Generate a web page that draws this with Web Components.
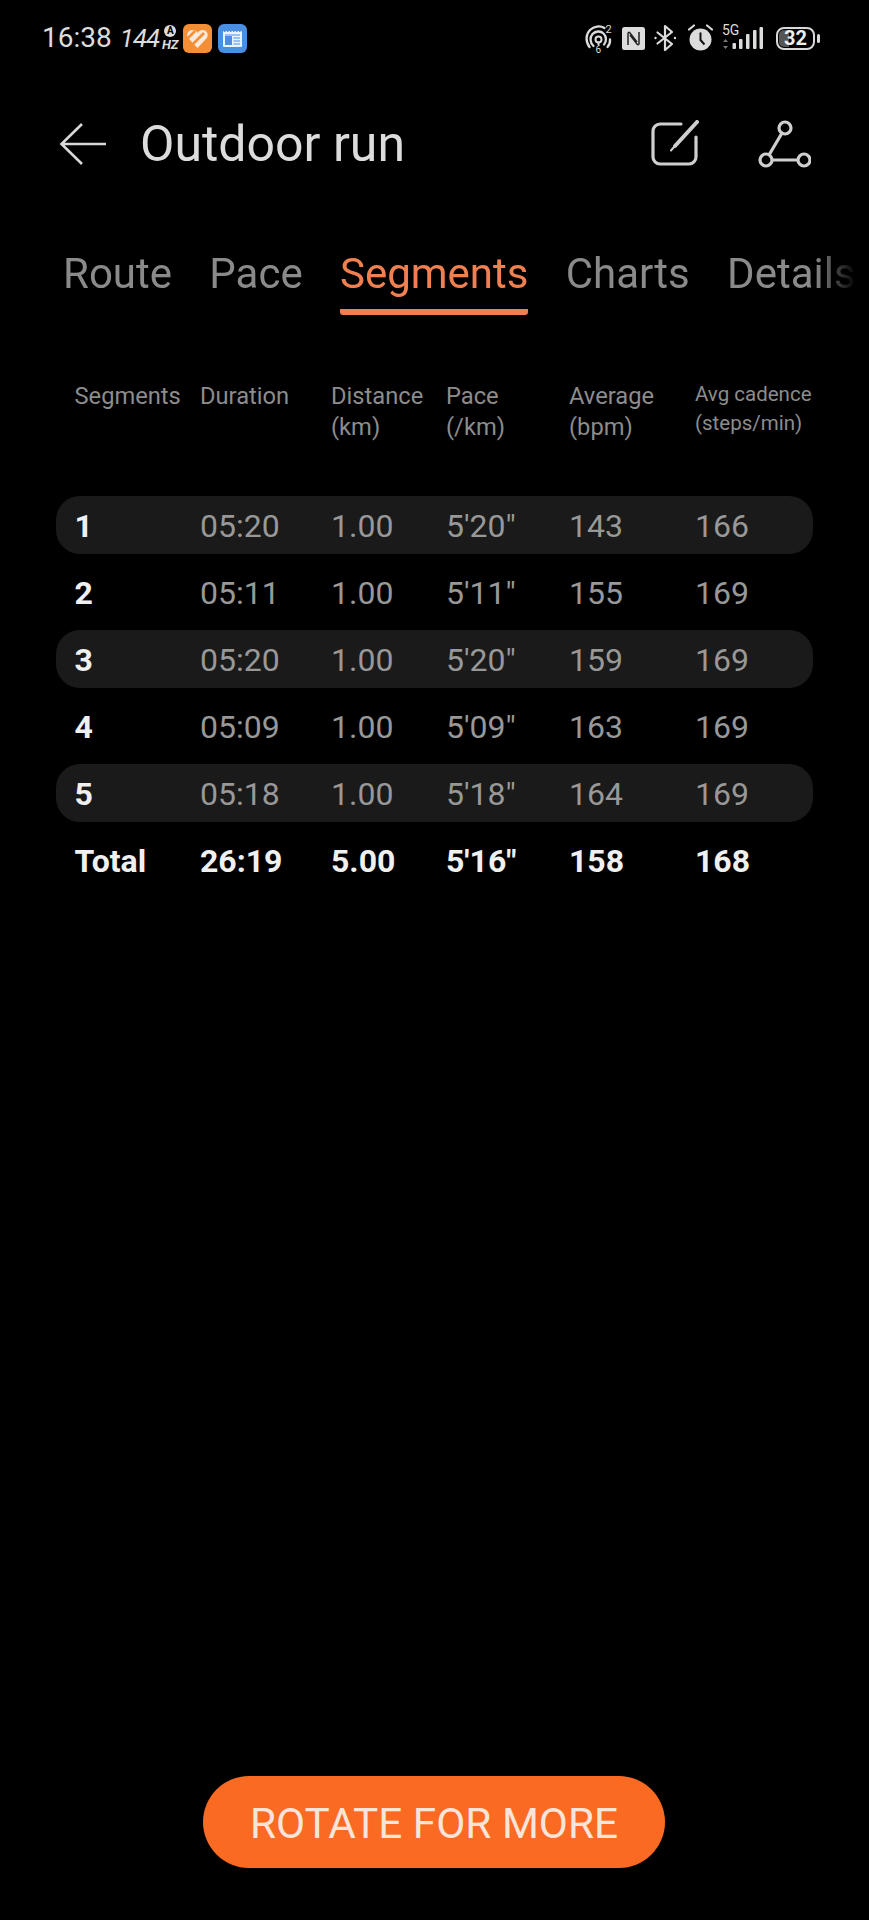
<!DOCTYPE html>
<html>
<head>
<meta charset="utf-8">
<title>Outdoor run</title>
<style>
html,body{ margin:0; background:#000; }
body{
    width:869px;
    height:1920px;
    overflow:hidden;
    display:flex;
    flex-direction:column;
    font-family:Roboto,"Liberation Sans",sans-serif;
    color:#ddd;
}
seg-table{ margin-top:66px; }
rotate-button{ margin-top:auto; margin-bottom:52px; margin-left:203px; align-self:flex-start; }
</style>
</head>
<body>
<status-bar></status-bar>
<run-header title="Outdoor run"></run-header>
<run-tabs active="2"></run-tabs>
<seg-table>
    <seg-row striped cells="1|05:20|1.00|5'20&quot;|143|166"></seg-row>
    <seg-row cells="2|05:11|1.00|5'11&quot;|155|169"></seg-row>
    <seg-row striped cells="3|05:20|1.00|5'20&quot;|159|169"></seg-row>
    <seg-row cells="4|05:09|1.00|5'09&quot;|163|169"></seg-row>
    <seg-row striped cells="5|05:18|1.00|5'18&quot;|164|169"></seg-row>
    <seg-row total cells="Total|26:19|5.00|5'16&quot;|158|168"></seg-row>
</seg-table>
<rotate-button>ROTATE FOR MORE</rotate-button>

<script>
class StatusBar extends HTMLElement {
    constructor() {
        super();
        const shadowRoot = this.attachShadow({ mode: 'open' });
        shadowRoot.innerHTML = `
        <style>
        :host{
            display:flex;
            align-items:center;
            height:28px;
            padding:24px 54px 0 42px;
            color:#dcdcdc;
        }
        .time{ font-size:28px; line-height:28px; }
        .hz{ display:flex; align-items:center; margin-left:8px; }
        .rate{ font-size:26px; font-style:italic; letter-spacing:-1px; line-height:28px; }
        .unit{ display:flex; flex-direction:column; align-items:center; margin-left:3px; width:16px; }
        .auto{
            width:12px; height:12px; border-radius:50%;
            background:#dcdcdc; color:#000;
            font-size:10px; font-weight:700; line-height:12px; text-align:center;
        }
        .hzt{ font-size:13px; font-weight:700; font-style:italic; line-height:13px; margin-top:1px; }
        .apps{ display:flex; gap:6px; margin-left:5px; }
        .apps svg{ display:block; }
        .right{ display:flex; align-items:center; margin-left:auto; }
        .right svg{ display:block; }
        .net{ position:relative; width:43px; height:28px; margin-left:8px; }
        .net span{ position:absolute; left:0; top:-1px; font-size:14px; line-height:14px; }
        .net svg{ position:absolute; left:0; top:0; }
        .batt{
            position:relative;
            box-sizing:border-box;
            width:39px; height:23px;
            margin-left:11px;
            border:2px solid #d8d8d8;
            border-radius:8px;
            font-size:20px; font-weight:700; line-height:19px; text-align:center;
            color:#eee;
            background:linear-gradient(90deg,#555 0,#555 32%,#000 32%);
            background-clip:content-box;
            padding:1px;
        }
        .batt span{ display:block; margin-top:-1px; }
        .batt::after{
            content:''; position:absolute; right:-7px; top:5px;
            width:3px; height:9px; border-radius:2px; background:#d8d8d8;
        }
        </style>
        <span class="time">16:38</span>
        <span class="hz">
            <span class="rate">144</span>
            <span class="unit"><span class="auto">A</span><span class="hzt">HZ</span></span>
        </span>
        <span class="apps">
            <svg width="29" height="29" viewBox="0 0 29 29">
                <rect width="29" height="29" rx="6" fill="#f58f35"/>
                <path d="M14.5 24 5.6 14.6C2.6 11 5 6 9.4 6c2 0 3.7 1 5.1 2.8C15.9 7 17.6 6 19.6 6c4.4 0 6.800 5 3.800 8.600Z" fill="#fbeadb"/>
                <path d="M2 17 12 7M8 22 21 9" stroke="#f58f35" stroke-width="2.600" fill="none"/>
            </svg>
            <svg width="29" height="29" viewBox="0 0 29 29">
                <rect width="29" height="29" rx="6" fill="#4b8fe3"/>
                <rect x="5" y="7" width="19" height="16" rx="1" fill="#eaf2fc"/>
                <path d="M6 7.500h17" stroke="#4b8fe3" stroke-width="1" stroke-dasharray="1.500 1.500"/>
                <rect x="7" y="12" width="7" height="9" fill="#4b8fe3"/>
                <path d="M7 11h15M15.500 14h6.500M15.500 17h6.500M15.500 20h6.500" stroke="#4b8fe3" stroke-width="1.200"/>
            </svg>
        </span>
        <span class="right">
            <svg width="30" height="30" viewBox="0 0 30 30" fill="none" stroke="#dcdcdc" stroke-linecap="round">
                <path d="M5.500 24C1.500 19 1.500 11.500 6 7c4-4 10-4.500 14.500-2" stroke-width="2.300"/>
                <path d="M26 16.500c.3 3-.7 5.500-2.500 7.500" stroke-width="2.300"/>
                <path d="M9.500 23c-3.500-3-4-8.500-1-12 3-3 8-3.500 11-.5 3 2.800 3.200 8 .5 11" stroke-width="2.300"/>
                <circle cx="14.500" cy="16.500" r="3" stroke-width="2"/>
                <path d="M14.500 19.500v2" stroke-width="2"/>
                <text x="21.500" y="9.500" fill="#dcdcdc" stroke="none" font-size="11" font-family="Roboto">2</text>
                <text x="11.500" y="29.500" fill="#dcdcdc" stroke="none" font-size="10" font-family="Roboto">6</text>
            </svg>
            <svg style="margin-left:8px" width="23" height="23" viewBox="0 0 23 23">
                <rect width="23" height="23" rx="2.500" fill="#dcdcdc"/>
                <path d="M6 18V6.500c0-1.300 1-1.500 1.800-.7L15 15M17 5v11.500c0 1.300-1 1.500-1.800.7L8 8" stroke="#222" stroke-width="1.500" fill="none" stroke-linejoin="round"/>
            </svg>
            <svg style="margin-left:9px" width="23" height="28" viewBox="0 0 23 28" fill="none" stroke="#dcdcdc" stroke-width="2.200" stroke-linejoin="round" stroke-linecap="round">
                <path d="M3.500 8.500 18 20l-7 6V2l7 6L3.500 19.500"/>
                <circle cx="1.500" cy="14" r="1.200" fill="#dcdcdc" stroke="none"/>
                <circle cx="21" cy="14" r="1.200" fill="#dcdcdc" stroke="none"/>
            </svg>
            <svg style="margin-left:10px" width="27" height="30" viewBox="0 0 27 30" fill="none">
                <circle cx="13.500" cy="16.500" r="11" fill="#dcdcdc"/>
                <path d="M13.500 9.500v7.500l4 4.500" stroke="#111" stroke-width="2"/>
                <path d="M2 6.500 7 2.500M25 6.500 20 2.500" stroke="#dcdcdc" stroke-width="2.200" stroke-linecap="round"/>
            </svg>
            <span class="net">
                <span>5G</span>
                <svg width="43" height="28" viewBox="0 0 43 28">
                    <path d="M3.500 15 1 18h5ZM3.500 25 1 22h5Z" fill="#777"/>
                    <g fill="#dcdcdc">
                        <rect x="10.500" y="19" width="3.500" height="6" rx="1"/>
                        <rect x="17" y="15" width="3.500" height="10" rx="1"/>
                        <rect x="24" y="10" width="3.500" height="15" rx="1"/>
                        <rect x="31" y="6" width="3.500" height="19" rx="1"/>
                        <rect x="37.500" y="3" width="3.500" height="22" rx="1"/>
                    </g>
                </svg>
            </span>
            <span class="batt"><span>32</span></span>
        </span>
        `
    }
}

class RunHeader extends HTMLElement {
    constructor() {
        super();
        const shadowRoot = this.attachShadow({ mode: 'open' });
        shadowRoot.innerHTML = `
        <style>
        :host{
            display:flex;
            align-items:center;
            height:60px;
            margin-top:62px;
            padding:0 58px 0 59px;
        }
        svg{ display:block; }
        h1{
            margin:0 0 0 33px;
            font-size:50px;
            font-weight:400;
            line-height:60px;
            color:#dcdcdc;
        }
        .tools{ display:flex; align-items:center; gap:58px; margin-left:auto; }
        </style>
        <svg width="48" height="44" viewBox="0 0 48 44" fill="none" stroke="#d8d8d8" stroke-width="2.600">
            <path d="M47 22H3M23 2 2.500 22 23 42"/>
        </svg>
        <h1></h1>
        <span class="tools">
            <svg width="50" height="48" viewBox="0 0 50 48" fill="none" stroke="#cfcfcf" stroke-width="3.200" stroke-linecap="round">
                <path d="M31 4H10a7 7 0 0 0-7 7v26a7 7 0 0 0 7 7h29a7 7 0 0 0 7-7V17"/>
                <path d="M47 2 25 26" stroke-width="4"/>
                <path d="M24 27 21 30.500" stroke-width="2"/>
            </svg>
            <svg width="53" height="48" viewBox="0 0 53 48" fill="none" stroke="#cfcfcf" stroke-width="3.200">
                <circle cx="27" cy="8" r="6"/>
                <circle cx="8" cy="40" r="6"/>
                <circle cx="46" cy="40" r="6"/>
                <path d="M24 13 11 35M14 40h26"/>
            </svg>
        </span>
        `
    }

    connectedCallback() {
        this.shadowRoot.querySelector('h1').textContent = this.getAttribute('title');
        this.removeAttribute('title');
    }
}

class RunTabs extends HTMLElement {
    constructor() {
        super();
        const shadowRoot = this.attachShadow({ mode: 'open' });
        shadowRoot.innerHTML = `
        <style>
        :host{
            display:flex;
            gap:37.300px;
            height:69px;
            margin-top:72px;
            padding-left:63px;
            overflow:hidden;
            -webkit-mask-image:linear-gradient(90deg,#000 0,#000 815px,transparent 856px);
            mask-image:linear-gradient(90deg,#000 0,#000 815px,transparent 856px);
        }
        .tab{
            flex:none;
            box-sizing:border-box;
            height:69px;
            font-size:42px;
            line-height:56px;
            color:#8a8a8a;
        }
        .tab.on{
            color:#f0804f;
            border-bottom:6px solid #f0804f;
            border-radius:0 0 3px 3px;
        }
        </style>
        `
        for (const name of ['Route','Pace','Segments','Charts','Details']) {
            const el = document.createElement('span');
            el.className = 'tab';
            el.textContent = name;
            shadowRoot.appendChild(el);
        }
    }

    connectedCallback() {
        const tabs = this.shadowRoot.querySelectorAll('.tab');
        tabs[Number(this.getAttribute('active'))].classList.add('on');
    }
}

const COLUMNS = 'grid-template-columns:125.500px 131px 115px 123px 126px 1fr;';

class SegTable extends HTMLElement {
    constructor() {
        super();
        const shadowRoot = this.attachShadow({ mode: 'open' });
        shadowRoot.innerHTML = `
        <style>
        :host{
            display:block;
            padding:0 56px;
        }
        .head{
            display:grid;
            ${COLUMNS}
            height:115px;
            padding-left:18.500px;
            font-size:23.700px;
            line-height:31px;
            color:#8c8c8c;
            white-space:nowrap;
        }
        .small{ font-size:20.500px; line-height:29px; margin-top:-1px; }
        .rows{ display:flex; flex-direction:column; gap:9px; }
        </style>
        <div class="head">
            <span>Segments</span>
            <span>Duration</span>
            <span>Distance<br>(km)</span>
            <span>Pace<br>(/km)</span>
            <span>Average<br>(bpm)</span>
            <span class="small">Avg cadence<br>(steps/min)</span>
        </div>
        <div class="rows"><slot></slot></div>
        `
    }
}

class SegRow extends HTMLElement {
    constructor() {
        super();
        const shadowRoot = this.attachShadow({ mode: 'open' });
        shadowRoot.innerHTML = `
        <style>
        :host{
            display:grid;
            ${COLUMNS}
            align-items:center;
            box-sizing:border-box;
            height:58px;
            padding:2px 0 0 18.500px;
            border-radius:24px;
            font-size:32px;
            color:#989898;
        }
        :host([striped]){ background:#1a1a1a; }
        span:first-of-type{ color:#f0f0f0; font-weight:700; }
        :host([total]){ color:#f0f0f0; font-weight:700; }
        </style>
        `
    }

    connectedCallback() {
        for (const text of this.getAttribute('cells').split('|')) {
            const el = document.createElement('span');
            el.textContent = text;
            this.shadowRoot.appendChild(el);
        }
    }
}

class RotateButton extends HTMLElement {
    constructor() {
        super();
        const shadowRoot = this.attachShadow({ mode: 'open' });
        shadowRoot.innerHTML = `
        <style>
        :host{
            display:flex;
            align-items:center;
            justify-content:center;
            box-sizing:border-box;
            width:462px;
            height:92px;
            padding-top:2px;
            border-radius:46px;
            background:#fb6a22;
            color:#f8e4d8;
            font-size:42.300px;
        }
        </style>
        <slot></slot>
        `
    }
}

customElements.define('status-bar', StatusBar);
customElements.define('run-header', RunHeader);
customElements.define('run-tabs', RunTabs);
customElements.define('seg-table', SegTable);
customElements.define('seg-row', SegRow);
customElements.define('rotate-button', RotateButton);
</script>
</body>
</html>
